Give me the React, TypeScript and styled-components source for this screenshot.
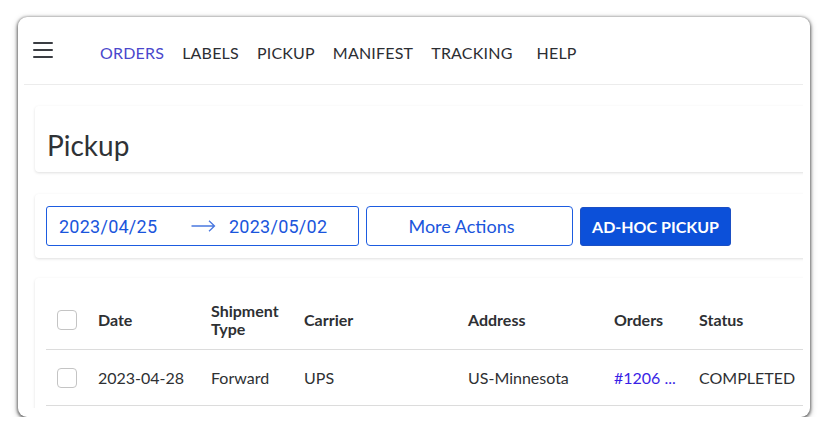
import React from "react";
import styled, { createGlobalStyle } from "styled-components";

const Global = createGlobalStyle`
  html, body { margin: 0; padding: 0; background: #ffffff; }
  body { font-family: "Lato", "Noto Sans", sans-serif; color: #2e3033; }
  * { box-sizing: border-box; }
`;

const Window = styled.div`
  margin: 17px 0 0 18px;
  width: 792px;
  height: 400px;
  background: #fff;
  border-radius: 9px;
  box-shadow: 0 1px 3px 1px rgba(0, 0, 0, 0.5), 0 2px 7px rgba(0, 0, 0, 0.25);
  display: flex;
  flex-direction: column;
  overflow: hidden;
`;

const Header = styled.header`
  margin: 0 7px 0 6px;
  height: 68px;
  border-bottom: 1px solid #ececec;
  display: flex;
  align-items: center;
  padding-left: 9px;
`;

const MenuButton = styled.div`
  width: 20px;
  height: 16px;
  display: flex;
  flex-direction: column;
  justify-content: space-between;
  margin-top: -2px;
  span {
    display: block;
    height: 2px;
    background: #3a3d42;
    border-radius: 1px;
  }
`;

const Nav = styled.nav`
  display: flex;
  margin-left: 47px;
  padding-top: 4px;
`;

const NavItem = styled.a<{ $active?: boolean; $gap?: number }>`
  font-size: 16px;
  letter-spacing: 0.2px;
  color: ${(p) => (p.$active ? "#4a47cc" : "#2c2e33")};
  margin-right: ${(p) => p.$gap ?? 18}px;
  text-decoration: none;
`;

const Content = styled.main`
  flex: 1;
  margin: 0 7px 9px 6px;
  overflow: hidden;
  padding: 21px 0 0 11px;
`;

const Stack = styled.div`
  width: 800px;
  display: flex;
  flex-direction: column;
`;

const Card = styled.section<{ $mt?: number }>`
  background: #fff;
  border-radius: 4px;
  box-shadow: 0 1px 3px rgba(0, 0, 0, 0.13);
  margin-top: ${(p) => p.$mt ?? 0}px;
`;

const TitleCard = styled(Card)`
  height: 66px;
  display: flex;
  align-items: center;
  padding-left: 12px;
`;

const Title = styled.h1`
  margin: 0;
  font-size: 28px;
  font-weight: 400;
  color: #2f3236;
  padding-top: 12px;
`;

const ActionsCard = styled(Card)`
  height: 64px;
  display: flex;
  align-items: center;
  padding: 0 11px;
  gap: 7px;
`;

const RangePicker = styled.div`
  width: 313px;
  height: 40px;
  border: 1px solid #1d5ce0;
  border-radius: 3px;
  display: flex;
  align-items: center;
  padding-left: 12px;
`;

const DateText = styled.span<{ $w?: number }>`
  font-family: "Roboto", "Noto Sans", sans-serif;
  font-size: 18px;
  letter-spacing: 0.25px;
  color: #1a55dc;
  width: ${(p) => (p.$w ? `${p.$w}px` : "auto")};
`;

const Arrow = styled.svg`
  width: 25px;
  height: 12px;
  margin-right: 13px;
`;

const OutlineButton = styled.button`
  width: 207px;
  height: 40px;
  border: 1px solid #1d5ce0;
  border-radius: 4px;
  background: #fff;
  color: #1a55dc;
  font-family: "Lato", sans-serif;
  font-size: 18px;
  padding: 0 16px 0 0;
`;

const PrimaryButton = styled.button`
  width: 151px;
  height: 39px;
  border: 1px solid #1b4fc4;
  border-radius: 3px;
  background: #0c50d9;
  color: #fff;
  font-family: "Lato", sans-serif;
  font-weight: 700;
  font-size: 16px;
  padding: 0;
`;

const TableCard = styled(Card)`
  margin-top: 20px;
  padding: 12px 0 0 11px;
  min-height: 200px;
`;

const Row = styled.div<{ $head?: boolean }>`
  display: grid;
  grid-template-columns: 52px 113px 93px 164px 146px 85px 1fr;
  align-items: center;
  height: ${(p) => (p.$head ? 60 : 56)}px;
  border-bottom: 1px solid #dcdcdc;
  font-size: 16px;
  font-weight: ${(p) => (p.$head ? 700 : 400)};
  color: #2e3033;
  line-height: 18px;
`;

const Cell = styled.div<{ $link?: boolean }>`
  padding-right: 12px;
  color: ${(p) => (p.$link ? "#3a1fe6" : "inherit")};
  white-space: ${(p) => (p.$link ? "nowrap" : "normal")};
`;

const CheckCell = styled.div`
  padding-left: 11px;
  display: flex;
  align-items: center;
`;

const Checkbox = styled.span`
  display: block;
  width: 20px;
  height: 20px;
  border: 1px solid #c4c4c4;
  border-radius: 4px;
  background: #fff;
`;

const navItems: { label: string; gap?: number; active?: boolean }[] = [
  { label: "ORDERS", active: true },
  { label: "LABELS" },
  { label: "PICKUP" },
  { label: "MANIFEST" },
  { label: "TRACKING", gap: 24 },
  { label: "HELP" },
];

export default function App() {
  return (
    <>
      <Global />
      <Window>
        <Header>
          <MenuButton>
            <span />
            <span />
            <span />
          </MenuButton>
          <Nav>
            {navItems.map((n) => (
              <NavItem key={n.label} $active={n.active} $gap={n.gap}>
                {n.label}
              </NavItem>
            ))}
          </Nav>
        </Header>
        <Content>
          <Stack>
            <TitleCard>
              <Title>Pickup</Title>
            </TitleCard>
            <ActionsCard $mt={22}>
              <RangePicker>
                <DateText $w={132}>2023/04/25</DateText>
                <Arrow viewBox="0 0 25 12" fill="none">
                  <path d="M0.5 6H23.5M18 0.8L23.5 6L18 11.2" stroke="#4a78e0" strokeWidth="1.3" />
                </Arrow>
                <DateText>2023/05/02</DateText>
              </RangePicker>
              <OutlineButton>More Actions</OutlineButton>
              <PrimaryButton>AD-HOC PICKUP</PrimaryButton>
            </ActionsCard>
            <TableCard>
              <Row $head>
                <CheckCell>
                  <Checkbox />
                </CheckCell>
                <Cell>Date</Cell>
                <Cell>Shipment Type</Cell>
                <Cell>Carrier</Cell>
                <Cell>Address</Cell>
                <Cell>Orders</Cell>
                <Cell>Status</Cell>
              </Row>
              <Row>
                <CheckCell>
                  <Checkbox />
                </CheckCell>
                <Cell>2023-04-28</Cell>
                <Cell>Forward</Cell>
                <Cell>UPS</Cell>
                <Cell>US-Minnesota</Cell>
                <Cell $link>#1206 ...</Cell>
                <Cell>COMPLETED</Cell>
              </Row>
            </TableCard>
          </Stack>
        </Content>
      </Window>
    </>
  );
}
